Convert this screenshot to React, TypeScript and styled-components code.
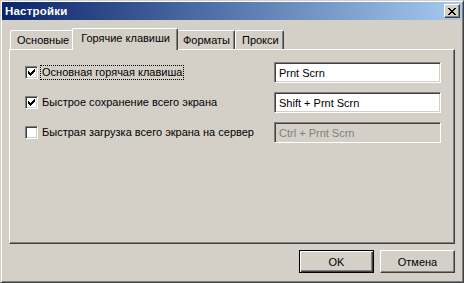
import React from "react";
import styled, { createGlobalStyle, css } from "styled-components";

const Global = createGlobalStyle`
  html, body { margin: 0; padding: 0; background: #d4d0c8; }
  body { font-family: "Liberation Sans", Arial, sans-serif; }
  * { box-sizing: border-box; }
`;

const FONT = `"Liberation Sans", Arial, sans-serif`;

const Window = styled.div`
  width: 464px;
  height: 283px;
  background: #d4d0c8;
  border: 1px solid;
  border-color: #d4d0c8 #404040 #404040 #d4d0c8;
  box-shadow: inset 1px 1px #ffffff, inset -1px -1px #808080;
  padding: 1px;
  display: flex;
  flex-direction: column;
  font-family: ${FONT};
  font-size: 11px;
  color: #000;
`;

const TitleBar = styled.div`
  height: 18px;
  background: linear-gradient(to right, #0a246a, #a6caf0);
  display: flex;
  align-items: center;
  padding: 0 2px 0 3px;
`;

const Title = styled.div`
  color: #fff;
  font-weight: bold;
  font-size: 11.5px;
  flex: 1;
  letter-spacing: 0.2px;
`;

const CloseBtn = styled.div`
  width: 16px;
  height: 14px;
  background: #d4d0c8;
  border: 1px solid;
  border-color: #fff #404040 #404040 #fff;
  box-shadow: inset -1px -1px #808080;
  display: flex;
  align-items: center;
  justify-content: center;
`;

const Body = styled.div`
  flex: 1;
  display: flex;
  flex-direction: column;
  padding: 8px 7px 0 7px;
`;

const TabRow = styled.div`
  display: flex;
  align-items: flex-end;
  height: 21px;
  padding-left: 1px;
  position: relative;
  z-index: 1;
`;

const Tab = styled.div<{ $active?: boolean }>`
  height: 19px;
  padding: 3px 4px 0 6px;
  background: #d4d0c8;
  border-top: 1px solid #fff;
  border-left: 1px solid #fff;
  border-right: 1px solid #404040;
  box-shadow: inset -1px 0 #808080;
  border-radius: 2px 2px 0 0;
  white-space: nowrap;
  ${(p) =>
    p.$active &&
    css`
      height: 22px;
      margin: 0 -2px -1px -2px;
      padding: 3px 7px 0 8px;
      position: relative;
      z-index: 2;
    `}
`;

const Panel = styled.div`
  height: 195px;
  border: 1px solid;
  border-color: #fff #404040 #404040 #fff;
  box-shadow: inset -1px -1px #808080;
  padding: 12px 13px 0 15px;
  display: flex;
  flex-direction: column;
  gap: 9px;
`;

const Row = styled.div`
  height: 21px;
  display: flex;
  align-items: center;
`;

const Check = styled.div`
  width: 13px;
  height: 13px;
  flex: none;
  background: #fff;
  border: 1px solid;
  border-color: #808080 #fff #fff #808080;
  box-shadow: inset 1px 1px #404040, inset -1px -1px #d4d0c8;
  display: flex;
  align-items: center;
  justify-content: center;
`;

const Label = styled.span<{ $focus?: boolean }>`
  margin-left: 2px;
  padding: 0 1px 1px 1px;
  border: 1px dotted ${(p) => (p.$focus ? "#000" : "transparent")};
  white-space: nowrap;
  line-height: 12px;
`;

const Input = styled.div<{ $disabled?: boolean }>`
  margin-left: auto;
  width: 167px;
  height: 21px;
  background: ${(p) => (p.$disabled ? "#d4d0c8" : "#fff")};
  color: ${(p) => (p.$disabled ? "#808080" : "#000")};
  border: 1px solid;
  border-color: #808080 #fff #fff #808080;
  box-shadow: inset 1px 1px #404040, inset -1px -1px #d4d0c8;
  padding: 0 4px;
  display: flex;
  align-items: center;
  white-space: nowrap;
`;

const Footer = styled.div`
  display: flex;
  justify-content: flex-end;
  gap: 6px;
  padding-top: 6px;
`;

const Button = styled.div<{ $default?: boolean }>`
  width: 75px;
  height: 23px;
  display: flex;
  align-items: center;
  justify-content: center;
  background: #d4d0c8;
  border: 1px solid;
  border-color: #fff #404040 #404040 #fff;
  box-shadow: inset -1px -1px #808080;
  ${(p) =>
    p.$default &&
    css`
      border: 1px solid #000;
      box-shadow: inset 1px 1px #fff, inset -1px -1px #404040,
        inset -2px -2px #808080;
    `}
`;

const Pixels = ({ rows, w, h }: { rows: string[]; w: number; h: number }) => (
  <svg width={w} height={h} viewBox={`0 0 ${w} ${h}`} shapeRendering="crispEdges">
    {rows.flatMap((r, y) =>
      r.split("").map((c, x) =>
        c === "x" ? <rect key={`${x}-${y}`} x={x} y={y} width={1} height={1} fill="#000" /> : null
      )
    )}
  </svg>
);

const CHECK = [
  "......x",
  ".....xx",
  "x...xxx",
  "xx.xxx.",
  "xxxxx..",
  ".xxx...",
  "..x....",
];

const XMARK = [
  "xx....xx",
  ".xx..xx.",
  "..xxxx..",
  "...xx...",
  "..xxxx..",
  ".xx..xx.",
  "xx....xx",
];

const rows = [
  { label: "Основная горячая клавиша", value: "Prnt Scrn", checked: true, focus: true },
  { label: "Быстрое сохранение всего экрана", value: "Shift + Prnt Scrn", checked: true },
  { label: "Быстрая загрузка всего экрана на сервер", value: "Ctrl + Prnt Scrn", checked: false, disabled: true },
];

export default function App() {
  return (
    <>
      <Global />
      <Window>
        <TitleBar>
          <Title>Настройки</Title>
          <CloseBtn>
            <Pixels rows={XMARK} w={8} h={7} />
          </CloseBtn>
        </TitleBar>
        <Body>
          <TabRow>
            <Tab>Основные</Tab>
            <Tab $active>Горячие клавиши</Tab>
            <Tab>Форматы</Tab>
            <Tab>Прокси</Tab>
          </TabRow>
          <Panel>
            {rows.map((r) => (
              <Row key={r.label}>
                <Check>{r.checked && <Pixels rows={CHECK} w={7} h={7} />}</Check>
                <Label $focus={r.focus}>{r.label}</Label>
                <Input $disabled={r.disabled}>{r.value}</Input>
              </Row>
            ))}
          </Panel>
          <Footer>
            <Button $default>OK</Button>
            <Button>Отмена</Button>
          </Footer>
        </Body>
      </Window>
    </>
  );
}
